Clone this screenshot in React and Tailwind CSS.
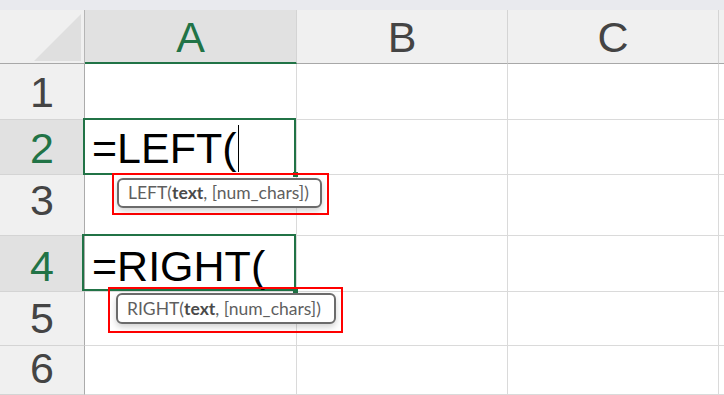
import React from "react";

const GREEN = "text-[#217346]";

function Tip({ fn, box, inner }) {
  return (
    <div className={`absolute z-20 border-2 border-[#ff0000] flex ${box}`}>
      <div
        className={`flex items-center rounded-[6px] border-2 border-[#6b6b6b] bg-white shadow-[0_3px_6px_rgba(0,0,0,0.18)] whitespace-nowrap text-[#5f5f5f] font-['Lato',sans-serif] text-[17.5px] leading-none ${inner}`}
      >
        <span>{fn}(</span>
        <span className="font-bold text-[#4a4a4a]">text</span>
        <span>, [num_chars])</span>
      </div>
    </div>
  );
}

export default function App() {
  const rowPads = ["pt-[7px]", "pt-[7px]", "pt-[4px]", "pt-[9px]", "pt-[5px]", "pt-[1px]"];
  const rows = [1, 2, 3, 4, 5, 6];
  const sel = (r) => r === 2 || r === 4;

  return (
    <div className="w-[724px] h-[395px] overflow-hidden bg-white flex flex-col font-['Liberation_Sans',Arial,sans-serif]">
      <div className="h-[10px] shrink-0 bg-[#e9eaee]" />
      <div className="grid flex-1 grid-cols-[85px_212px_211px_211px_1fr] grid-rows-[54px_56px_55px_61px_56px_54px_1fr]">
        {/* header row */}
        <div className="relative bg-[#f0f0f0] border-r border-r-[#b5b5b5] border-b border-b-[#a8a8a8]">
          <svg className="absolute left-0 top-0" width="84" height="53" viewBox="0 0 84 53">
            <polygon points="81,4 81,51 34,51" fill="#dfdfdf" />
          </svg>
        </div>
        <div className={`bg-[#e1e1e1] border-r border-r-[#d4d4d4] border-b-2 border-b-[#217346] flex justify-center pt-[6px] text-[43px] leading-[43px] ${GREEN}`}>
          A
        </div>
        <div className="bg-[#f0f0f0] border-r border-r-[#d4d4d4] border-b border-b-[#a8a8a8] flex justify-center pt-[6px] text-[43px] leading-[43px] text-[#444]">
          B
        </div>
        <div className="bg-[#f0f0f0] border-r border-r-[#d4d4d4] border-b border-b-[#a8a8a8] flex justify-center pt-[6px] text-[43px] leading-[43px] text-[#444]">
          C
        </div>
        <div className="bg-[#f0f0f0] border-b border-b-[#a8a8a8]" />

        {rows.map((r, i) => (
          <React.Fragment key={r}>
            <div
              className={`flex justify-center text-[43px] leading-[43px] border-r border-r-[#ababab] border-b border-b-[#d4d4d4] ${rowPads[i]} ${
                sel(r) ? `bg-[#e1e1e1] ${GREEN}` : "bg-[#f0f0f0] text-[#444]"
              }`}
            >
              {r}
            </div>
            <div className={`relative border-r border-b border-[#dadada] ${sel(r) ? "z-10" : ""}`}>
              {r === 2 && (
                <>
                  <div className="absolute -left-[2px] -top-[2px] right-0 -bottom-[1px] border-2 border-[#217346]" />
                  <div className="absolute right-[-2px] bottom-[-3px] w-[5px] h-[5px] bg-[#217346]" />
                  <div className="relative flex items-start pl-[7px] pt-[7px] text-[43px] leading-[43px] text-black">
                    <span>=LEFT(</span>
                    <span className="w-[1px] h-[47px] bg-black -mt-[2px] ml-[1px]" />
                  </div>
                  <Tip fn="LEFT" box="left-[27px] top-[53px] w-[217px] h-[42px] pl-[3px] pt-[3px]" inner="w-[205px] h-[30px] pl-[9px]" />
                </>
              )}
              {r === 4 && (
                <>
                  <div className="absolute -left-[3px] -top-[2px] right-0 bottom-0 border-2 border-[#217346]" />
                  <div className="absolute right-[-2px] bottom-[-2px] w-[5px] h-[5px] bg-[#217346]" />
                  <div className="relative flex items-start pl-[7px] pt-[9px] text-[43px] leading-[43px] text-black">
                    <span>=RIGHT(</span>
                  </div>
                  <Tip fn="RIGHT" box="left-[23px] top-[51px] w-[235px] h-[46px] pl-[6px] pt-[4px]" inner="w-[220px] h-[31px] pl-[9px]" />
                </>
              )}
            </div>
            <div className="border-r border-b border-[#dadada]" />
            <div className="border-r border-b border-[#dadada]" />
            <div className="border-b border-[#dadada]" />
          </React.Fragment>
        ))}
      </div>
    </div>
  );
}
